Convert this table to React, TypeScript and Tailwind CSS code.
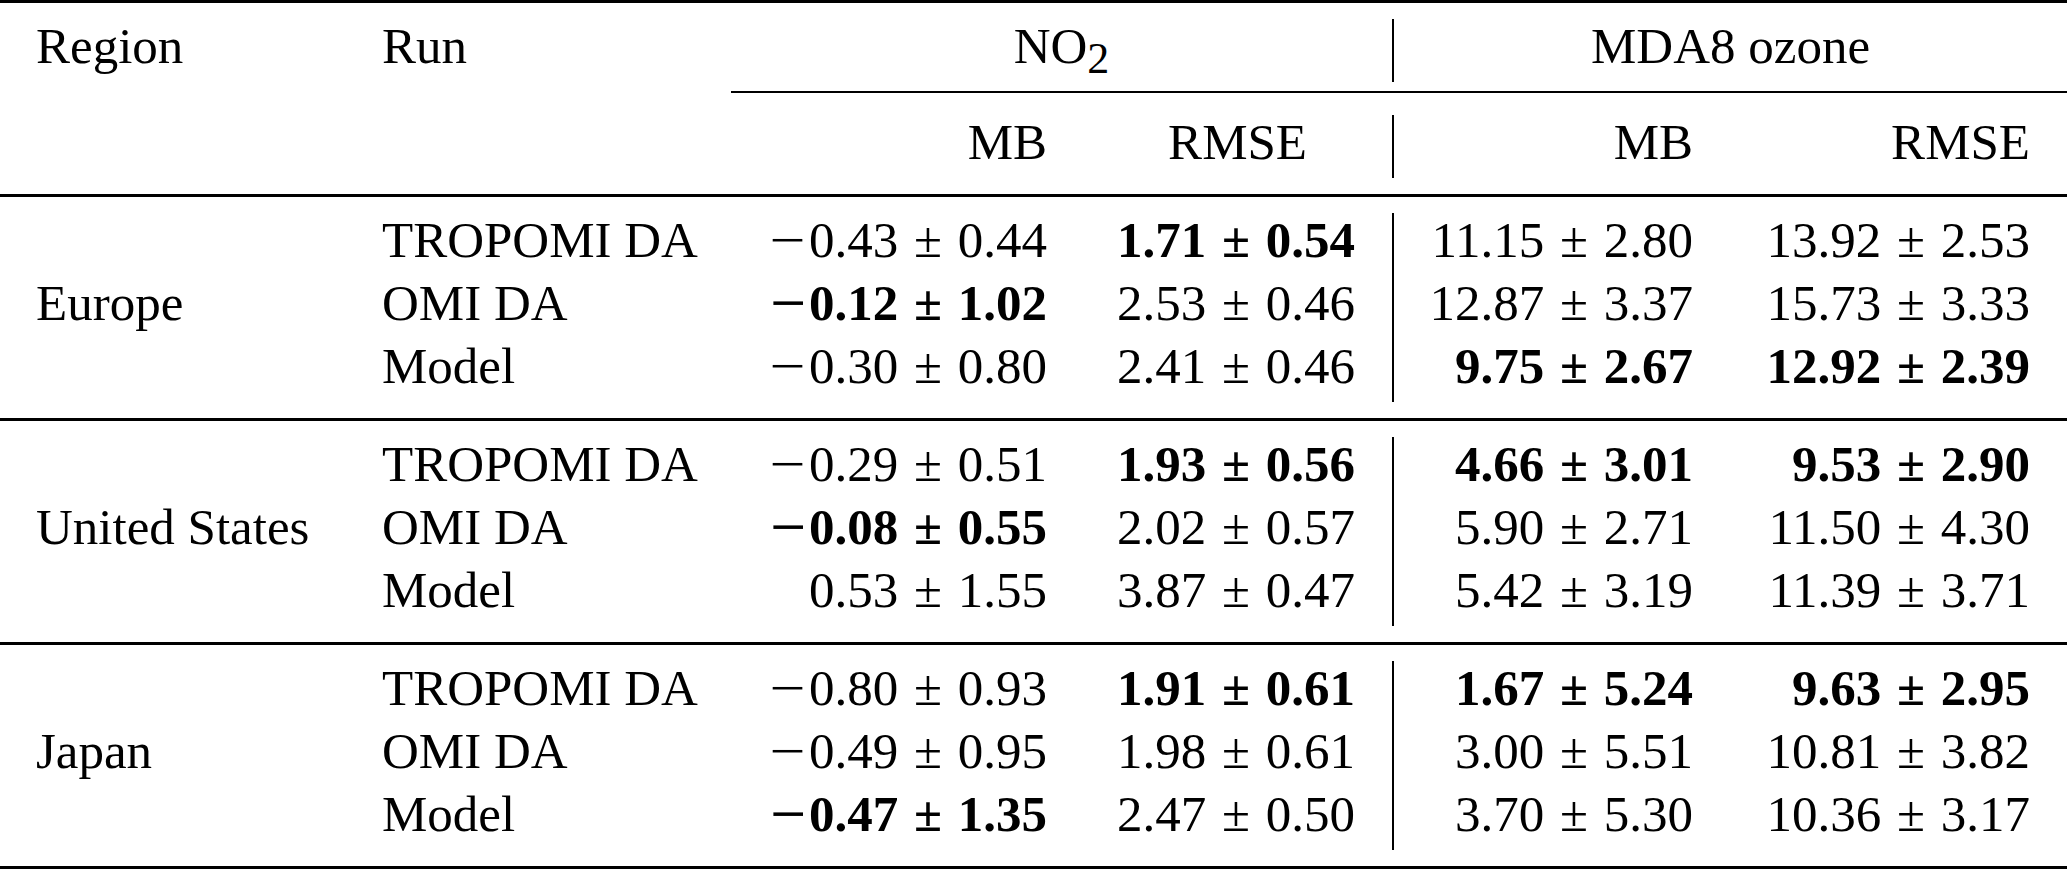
type Cell = [string, boolean];
type Run = { name: string; cells: Cell[] };
type Block = { region: string; runs: Run[] };

const blocks: Block[] = [
  {
    region: "Europe",
    runs: [
      { name: "TROPOMI DA", cells: [["−0.43 ± 0.44", false], ["1.71 ± 0.54", true], ["11.15 ± 2.80", false], ["13.92 ± 2.53", false]] },
      { name: "OMI DA", cells: [["−0.12 ± 1.02", true], ["2.53 ± 0.46", false], ["12.87 ± 3.37", false], ["15.73 ± 3.33", false]] },
      { name: "Model", cells: [["−0.30 ± 0.80", false], ["2.41 ± 0.46", false], ["9.75 ± 2.67", true], ["12.92 ± 2.39", true]] },
    ],
  },
  {
    region: "United States",
    runs: [
      { name: "TROPOMI DA", cells: [["−0.29 ± 0.51", false], ["1.93 ± 0.56", true], ["4.66 ± 3.01", true], ["9.53 ± 2.90", true]] },
      { name: "OMI DA", cells: [["−0.08 ± 0.55", true], ["2.02 ± 0.57", false], ["5.90 ± 2.71", false], ["11.50 ± 4.30", false]] },
      { name: "Model", cells: [["0.53 ± 1.55", false], ["3.87 ± 0.47", false], ["5.42 ± 3.19", false], ["11.39 ± 3.71", false]] },
    ],
  },
  {
    region: "Japan",
    runs: [
      { name: "TROPOMI DA", cells: [["−0.80 ± 0.93", false], ["1.91 ± 0.61", true], ["1.67 ± 5.24", true], ["9.63 ± 2.95", true]] },
      { name: "OMI DA", cells: [["−0.49 ± 0.95", false], ["1.98 ± 0.61", false], ["3.00 ± 5.51", false], ["10.81 ± 3.82", false]] },
      { name: "Model", cells: [["−0.47 ± 1.35", true], ["2.47 ± 0.50", false], ["3.70 ± 5.30", false], ["10.36 ± 3.17", false]] },
    ],
  },
];

const rowGrid = "grid h-[63px] grid-cols-[382px_349px_316px_308px_37px_2px_299px_337px_37px] leading-[54px]";

function Value({ cell }: { cell: Cell }) {
  const [text, bold] = cell;
  const [mean, spread] = text.split(" ± ");
  const negative = mean.startsWith("−");
  return (
    <span className={bold ? "font-bold" : ""}>
      {negative && <span className="mr-[3px] inline-block origin-right scale-x-[1.25]">−</span>}
      {negative ? mean.slice(1) : mean}
      <span className="mx-[3px]"> ± </span>
      {spread}
    </span>
  );
}

function Rule() {
  return <div className="h-[3px] w-full bg-black" />;
}

export default function App() {
  return (
    <main className="min-h-screen w-[2067px] bg-white text-[51px] text-black [font-family:'Liberation_Serif','Times_New_Roman',serif]">
      <div className="flex flex-col">
        <Rule />

        {/* header row 1 */}
        <div className="mt-[16px] grid h-[63px] grid-cols-[382px_349px_661px_2px_673px] leading-[54px]">
          <div className="pl-[36px]">Region</div>
          <div>Run</div>
          <div className="text-center">
            NO<span className="relative top-[10px] text-[44px]">2</span>
          </div>
          <div className="bg-black" />
          <div className="text-center">MDA8 ozone</div>
        </div>

        {/* cmidrule */}
        <div className="mt-[9px] flex">
          <div className="w-[731px]" />
          <div className="h-[2px] flex-1 bg-black" />
        </div>

        {/* header row 2 */}
        <div className={`mt-[22px] ${rowGrid}`}>
          <div />
          <div />
          <div className="text-right">MB</div>
          <div className="pr-[48px] text-right">RMSE</div>
          <div />
          <div className="bg-black" />
          <div className="text-right">MB</div>
          <div className="text-right">RMSE</div>
          <div />
        </div>

        <div className="mt-[16px]">
          <Rule />
        </div>

        {blocks.map((block) => (
          <div key={block.region}>
            <div className="my-[16px] flex flex-col">
              {block.runs.map((run, i) => (
                <div key={run.name} className={rowGrid}>
                  <div className="whitespace-nowrap pl-[36px]">{i === 1 ? block.region : ""}</div>
                  <div className="whitespace-nowrap">{run.name}</div>
                  <div className="whitespace-nowrap text-right">
                    <Value cell={run.cells[0]} />
                  </div>
                  <div className="whitespace-nowrap text-right">
                    <Value cell={run.cells[1]} />
                  </div>
                  <div />
                  <div className="bg-black" />
                  <div className="whitespace-nowrap text-right">
                    <Value cell={run.cells[2]} />
                  </div>
                  <div className="whitespace-nowrap text-right">
                    <Value cell={run.cells[3]} />
                  </div>
                  <div />
                </div>
              ))}
            </div>
            <Rule />
          </div>
        ))}
      </div>
    </main>
  );
}
